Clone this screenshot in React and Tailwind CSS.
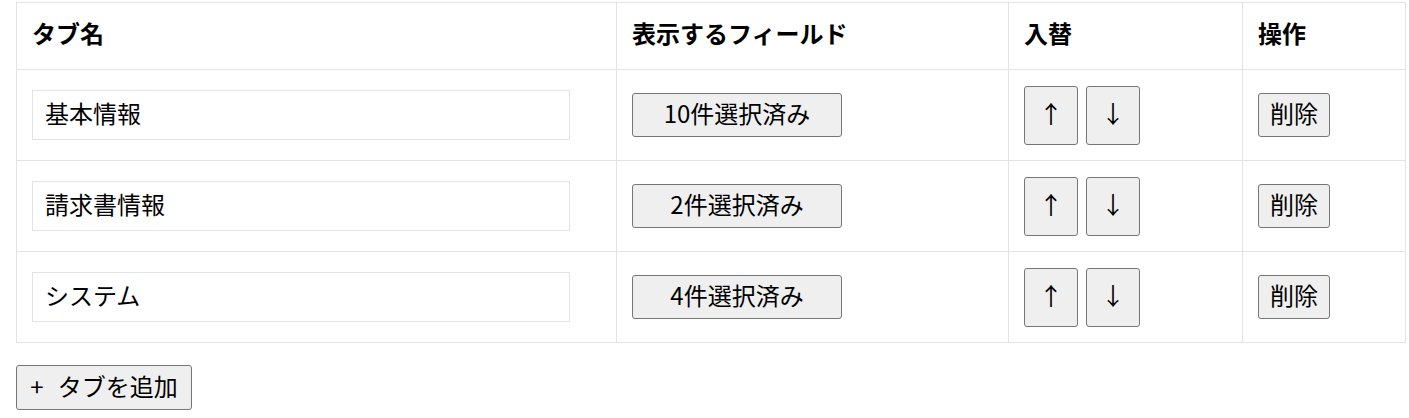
import { useState } from 'react';

const initialTabs = [
  { name: '基本情報', count: 10 },
  { name: '請求書情報', count: 2 },
  { name: 'システム', count: 4 },
];

const btn = 'bg-[#efefef] border border-[#767676] rounded-[3px] text-black leading-none pb-[4px]';

export default function App() {
  const [tabs, setTabs] = useState(initialTabs);

  const move = (i, dir) => {
    const j = i + dir;
    if (j < 0 || j >= tabs.length) return;
    const next = [...tabs];
    [next[i], next[j]] = [next[j], next[i]];
    setTabs(next);
  };

  return (
    <div
      className="min-h-screen bg-white px-4 pt-[2px] text-black text-[24px]"
      style={{ fontFamily: '"Noto Sans CJK JP", "Noto Sans", sans-serif' }}
    >
      <table className="w-[1390px] table-fixed border-collapse">
        <thead>
          <tr className="h-[67px]">
            <th className="w-[600px] border border-[#e3e3e3] pl-[15px] pr-4 pb-[6px] text-left font-bold">タブ名</th>
            <th className="w-[392px] border border-[#e3e3e3] pl-[15px] pr-4 pb-[6px] text-left font-bold">表示するフィールド</th>
            <th className="w-[234px] border border-[#e3e3e3] pl-[15px] pr-4 pb-[6px] text-left font-bold">入替</th>
            <th className="border border-[#e3e3e3] pl-[15px] pr-4 pb-[6px] text-left font-bold">操作</th>
          </tr>
        </thead>
        <tbody>
          {tabs.map((tab, i) => (
            <tr key={tab.name} className="h-[91px]">
              <td className="border border-[#e3e3e3] pl-[15px] pr-4">
                <input
                  className="h-[50px] w-[538px] border border-[#e3e3e3] px-3 pb-[5px] outline-none"
                  value={tab.name}
                  onChange={(e) => {
                    const next = [...tabs];
                    next[i] = { ...next[i], name: e.target.value };
                    setTabs(next);
                  }}
                />
              </td>
              <td className="border border-[#e3e3e3] pl-[15px] pr-4">
                <button className={`${btn} h-[44px] w-[210px]`}>{tab.count}件選択済み</button>
              </td>
              <td className="border border-[#e3e3e3] pl-[15px] pr-4">
                <div className="flex gap-2">
                  <button className={`${btn} h-[59px] w-[54px]`} onClick={() => move(i, -1)}>↑</button>
                  <button className={`${btn} h-[59px] w-[54px]`} onClick={() => move(i, 1)}>↓</button>
                </div>
              </td>
              <td className="border border-[#e3e3e3] pl-[15px] pr-4">
                <button className={`${btn} h-[44px] w-[72px]`}>削除</button>
              </td>
            </tr>
          ))}
        </tbody>
      </table>
      <button className={`${btn} mt-[22px] h-[45px] w-[176px]`}>
        <span className="mr-[14px]">+</span>タブを追加
      </button>
    </div>
  );
}
